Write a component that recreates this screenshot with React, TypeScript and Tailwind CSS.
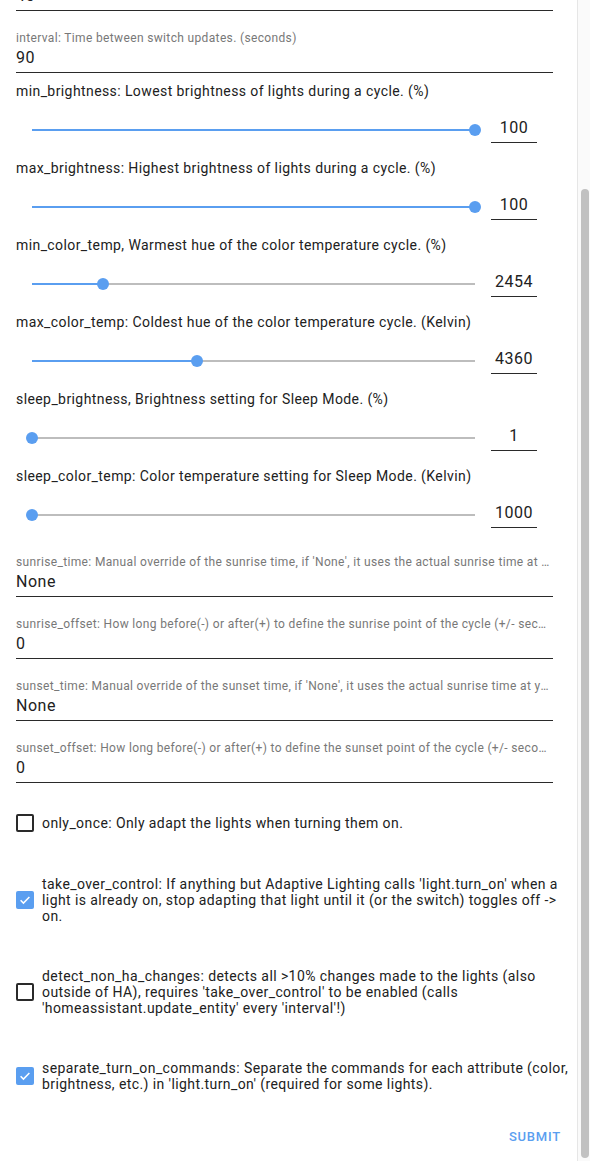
import React from "react";

function TextField({ label, value, pt = "pt-[19px]" }: { label: string; value: string; pt?: string }) {
  return (
    <div className={`${pt} mr-6 flex flex-col border-b border-[#2a2a2a]`}>
      <div className="h-4 truncate text-[12px] leading-4 tracking-[0.35px] text-[#787878]">{label}</div>
      <div className="h-[26px] text-[16px] leading-[24px] tracking-[0.5px] text-[#212121]">{value}</div>
    </div>
  );
}

function SliderRow({ label, value, pct }: { label: string; value: string; pct: number }) {
  return (
    <div className="mr-6 flex flex-col">
      <div className="h-5 whitespace-nowrap text-[14px] leading-5 tracking-[0.41px] text-[#212121]">{label}</div>
      <div className="flex h-[57px] items-center">
        <div className="flex h-full flex-1 items-center px-4">
          <div className="relative h-[2px] w-full bg-[#bdbdbd]">
            <div className="h-full bg-[#5a9ef0]" style={{ width: `${pct}%` }} />
            <div
              className="absolute top-1/2 size-3 -translate-x-1/2 -translate-y-1/2 rounded-full bg-[#5a9ef0]"
              style={{ left: `${pct}%` }}
            />
          </div>
        </div>
        <div className="flex h-[26px] w-[46px] items-center justify-center border-b border-[#2a2a2a] pb-[3px] text-[16px] tracking-[0.5px] text-[#212121]">
          {value}
        </div>
        <div className="w-4" />
      </div>
    </div>
  );
}

function Checkbox({ checked, lines }: { checked: boolean; lines: string[] }) {
  return (
    <div className="flex items-center gap-2">
      {checked ? (
        <div className="flex size-[18px] shrink-0 items-center justify-center rounded-[2px] bg-[#5a9ef0]">
          <svg width="14" height="14" viewBox="0 0 24 24">
            <path d="M4.5 12.5l4.8 4.8L19.5 7" fill="none" stroke="white" strokeWidth="2.6" />
          </svg>
        </div>
      ) : (
        <div className="size-[18px] shrink-0 rounded-[2px] border-2 border-[#2a2a2a]" />
      )}
      <div className="text-[14px] leading-4 tracking-[0.41px] text-[#212121]">
        {lines.map((l, i) => (
          <div key={i} className="whitespace-nowrap">
            {l}
          </div>
        ))}
      </div>
    </div>
  );
}

export default function App() {
  return (
    <div
      className="flex h-[1161px] w-[590px] overflow-hidden bg-white"
      style={{ fontFamily: "Roboto, 'Noto Sans', sans-serif" }}
    >
      <div className="flex w-[577px] flex-col pl-4">
        <div className="-mt-[51px]">
          <TextField label="transition: Duration of transition when lights change, in seconds" value="45" />
        </div>
        <TextField label="interval: Time between switch updates. (seconds)" value="90" />
        <div className="flex flex-col pt-2">
          <SliderRow label="min_brightness: Lowest brightness of lights during a cycle. (%)" value="100" pct={100} />
          <SliderRow label="max_brightness: Highest brightness of lights during a cycle. (%)" value="100" pct={100} />
          <SliderRow label="min_color_temp, Warmest hue of the color temperature cycle. (%)" value="2454" pct={16} />
          <SliderRow label="max_color_temp: Coldest hue of the color temperature cycle. (Kelvin)" value="4360" pct={37.2} />
          <SliderRow label="sleep_brightness, Brightness setting for Sleep Mode. (%)" value="1" pct={0} />
          <SliderRow label="sleep_color_temp: Color temperature setting for Sleep Mode. (Kelvin)" value="1000" pct={0} />
        </div>
        <TextField
          pt="pt-[11px]"
          label="sunrise_time: Manual override of the sunrise time, if 'None', it uses the actual sunrise time at your location (HH:MM:SS format)"
          value="None"
        />
        <TextField
          label="sunrise_offset: How long before(-) or after(+) to define the sunrise point of the cycle (+/- seconds)"
          value="0"
        />
        <TextField
          label="sunset_time: Manual override of the sunset time, if 'None', it uses the actual sunrise time at your location (HH:MM:SS format)"
          value="None"
        />
        <TextField
          label="sunset_offset: How long before(-) or after(+) to define the sunset point of the cycle (+/- seconds)"
          value="0"
        />
        <div className="flex flex-col gap-[44px] pt-[31px]">
          <Checkbox checked={false} lines={["only_once: Only adapt the lights when turning them on."]} />
          <Checkbox
            checked
            lines={[
              "take_over_control: If anything but Adaptive Lighting calls 'light.turn_on' when a",
              "light is already on, stop adapting that light until it (or the switch) toggles off ->",
              "on.",
            ]}
          />
          <Checkbox
            checked={false}
            lines={[
              "detect_non_ha_changes: detects all >10% changes made to the lights (also",
              "outside of HA), requires 'take_over_control' to be enabled (calls",
              "'homeassistant.update_entity' every 'interval'!)",
            ]}
          />
          <Checkbox
            checked
            lines={[
              "separate_turn_on_commands: Separate the commands for each attribute (color,",
              "brightness, etc.) in 'light.turn_on' (required for some lights).",
            ]}
          />
        </div>
        <div className="flex justify-end pr-4 pt-[37px]">
          <span className="text-[13px] font-medium leading-4 tracking-[0.06em] text-[#5a9ef0]">SUBMIT</span>
        </div>
      </div>
      <div className="flex w-[13px] flex-col border-l border-[#e6e6e6] bg-[#fafafa] pb-[3px] pl-[3px] pr-px pt-[189px]">
        <div className="w-2 flex-1 rounded-full bg-[#c1c1c1]" />
      </div>
    </div>
  );
}
